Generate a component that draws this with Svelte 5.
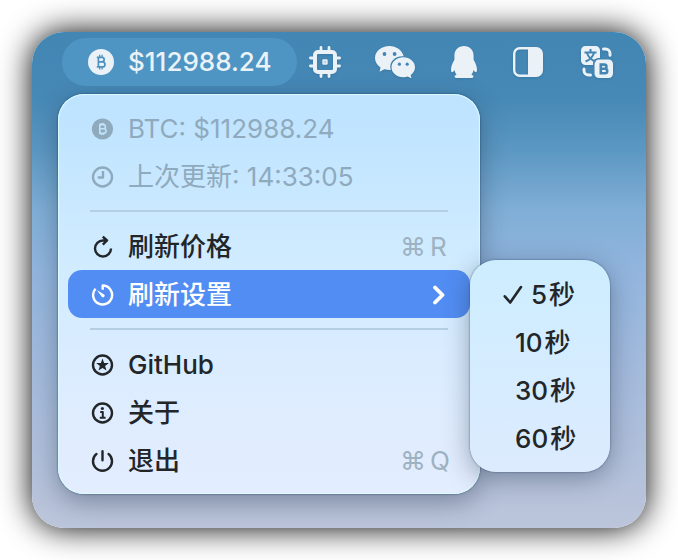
<script>
  const price = '$112988.24';
  const updated = '14:33:05';
  const intervals = [5, 10, 30, 60];
  let selected = $state(5);
</script>

{#snippet bitcoin()}
  <svg class="icon" viewBox="0 0 24 24" aria-hidden="true">
    <circle cx="12.500" cy="12" r="10.6" fill="currentColor" />
    <path class="cut" d="M9.8 7.600h3.500a2.100 2.100 0 0 1 0 4.200H9.800zM9.800 11.800h4a2.250 2.250 0 0 1 0 4.500H9.800zM11.300 6v1.600M13.500 6v1.600M11.300 16.300v1.600M13.500 16.300v1.600" />
  </svg>
{/snippet}

<main class="desktop">
  <header class="menubar">
    <button class="status">
      <svg viewBox="0 0 26 26" width="26" height="26" aria-hidden="true">
        <circle cx="13" cy="13" r="13" fill="#eaf2f7" />
        <g fill="none" stroke="#4d92c0" stroke-width="1.700" stroke-linejoin="round">
          <path d="M10.400 8.300h3.500a2.300 2.300 0 0 1 0 4.600h-3.500zM10.400 12.900h4.100a2.500 2.500 0 0 1 0 5h-4.100M10.400 8.300v9.600M8.800 8.300h1.600M8.800 17.900h1.600" />
          <path stroke-width="1.300" d="M11.700 5.800v2.500M14.100 5.800v2.500M11.700 17.900v2.500M14.100 17.900v2.500" />
        </g>
      </svg>
      <span>{price}</span>
    </button>
    <nav class="tray" aria-label="菜单栏">
      <button aria-label="CPU">
        <svg width="32" height="32" viewBox="0 0 32 32" fill="none" stroke="currentColor">
          <rect x="6" y="6" width="20" height="20" rx="3" stroke-width="4" />
          <path stroke-width="2.800" stroke-linecap="round" d="M12 1.400V5M20 1.400V5M12 27v3.600M20 27v3.600M1.400 12H5M1.400 20H5M27 12h3.600M27 20h3.600" />
          <rect x="14" y="14" width="4" height="4" rx="0.500" fill="#bcd3e2" stroke-width="1.400" />
        </svg>
      </button>
      <button aria-label="微信">
        <svg width="40" height="32" viewBox="0 0 40 32">
          <path fill="currentColor" d="M14.500 0C6.500 0 0 5.200 0 12c0 3.900 2.100 7.200 5.500 9.400L4.600 25.800l4.800-2.600c1.800.5 3.600.8 5.600.8h.8C13.500 16 20 9.800 28.700 10.300 27 4.200 21.300 0 14.500 0z" />
          <path fill="currentColor" d="M28.300 11.200c-6.600 0-11.800 4.500-11.800 10s5.200 10 11.800 10c1.600 0 3.100-.3 4.500-.7l3.700 1.900-.8-3.500c2.700-1.800 4.300-4.600 4.300-7.700 0-5.500-5.100-10-11.700-10z" />
          <g fill="#4385b3">
            <circle cx="9.500" cy="8" r="1.900" /><circle cx="19.600" cy="8" r="1.900" />
            <circle cx="24.400" cy="18.200" r="1.600" /><circle cx="32.200" cy="18.200" r="1.600" />
          </g>
        </svg>
      </button>
      <button aria-label="QQ">
        <svg width="30" height="32" viewBox="0 0 30 32">
          <path fill="currentColor" d="M15 0C9.500 0 5.400 4 5.400 9.500v4.300C3.500 17 2 20.700 2 23.700c0 1.600.4 2.500 1 2.500.7 0 1.600-1 2.400-2.300.5 2 1.100 3.300 2.200 4.800-1.300.4-2 1-2 2 0 .9 1 1.200 3.200 1.200h12.400c2.200 0 3.200-.3 3.200-1.200 0-1-.7-1.600-2-2 1.100-1.500 1.700-2.800 2.200-4.800.8 1.300 1.700 2.300 2.400 2.300.6 0 1-.9 1-2.500 0-3-1.500-6.700-3.400-9.900V9.500C24.600 4 20.500 0 15 0z" />
        </svg>
      </button>
      <button aria-label="分屏">
        <svg width="30" height="30" viewBox="0 0 30 30">
          <rect x="1.200" y="1.200" width="27.600" height="27.600" rx="5.500" fill="none" stroke="currentColor" stroke-width="2.400" />
          <path fill="currentColor" d="M15 1h8a6 6 0 0 1 6 6v16a6 6 0 0 1-6 6h-8z" />
        </svg>
      </button>
      <button aria-label="翻译">
        <svg width="40" height="32" viewBox="0 0 40 32">
          <g transform="translate(4 0)">
            <path fill="currentColor" d="M4.500 0h10A4.500 4.500 0 0 1 19 4.500V12h-1.500a5.500 5.500 0 0 0-5.500 5.500V19H4.500A4.500 4.500 0 0 1 0 14.500v-10A4.500 4.500 0 0 1 4.500 0z" />
            <rect x="13.500" y="13.500" width="18.500" height="18.500" rx="4.500" fill="currentColor" />
            <g fill="none" stroke="#4385b3" stroke-width="2">
              <path d="M9.500 3v3M3.500 6.500h12M6 7c1.300 4 4.300 7 8.500 8.500M13 7c-1.300 4-4.300 7-8.500 8.500" />
              <path stroke-width="2.600" d="M19.800 18.600h3.600a2.050 2.050 0 0 1 0 4.100h-3.600zM19.800 22.700h4.200a2.250 2.250 0 0 1 0 4.500h-4.200z" />
            </g>
            <g fill="none" stroke="currentColor" stroke-width="3" stroke-linecap="round">
              <path d="M22.500 3h2a4.500 4.500 0 0 1 4.500 4.500v1.800M3 23v1.500A4.500 4.500 0 0 0 7.500 29h2" />
            </g>
          </g>
        </svg>
      </button>
    </nav>
  </header>

  <div class="menu panel">
    <button class="row" disabled>
      {@render bitcoin()}
      <span>BTC: {price}</span>
    </button>
    <button class="row" disabled>
      <svg class="icon line" viewBox="0 0 24 24" aria-hidden="true">
        <circle cx="12.500" cy="12" r="9.500" />
        <path d="M13 6v6.500H7.800" />
      </svg>
      <span>上次更新: {updated}</span>
    </button>
    <hr />
    <button class="row">
      <svg class="icon line" viewBox="0 0 24 24" aria-hidden="true">
        <path d="M16.300 5.500H13A8 8 0 1 0 21 13.500M12.800 1.600l4.200 3.900-4.200 4.200" />
      </svg>
      <span>刷新价格</span>
      <kbd><span>⌘</span><span>R</span></kbd>
    </button>
    <div class="parent">
      <button class="row active" aria-haspopup="true" aria-expanded="true">
        <svg class="icon line" viewBox="0 0 24 24" aria-hidden="true">
          <path d="M12.700 6.800V2.500A9.500 9.500 0 1 1 5.500 5.700" />
          <path stroke="none" fill="currentColor" d="M6.800 7 14.100 11.400a1.700 1.700 0 1 1-2.400 2.400z" />
        </svg>
        <span>刷新设置</span>
        <svg class="chevron" width="16" height="20" viewBox="0 0 16 20" aria-hidden="true">
          <path d="M3 2.500l7.500 7.500L3 17.500" />
        </svg>
      </button>
      <div class="submenu panel" role="radiogroup" aria-label="刷新设置">
        {#each intervals as seconds}
          <label class="option" class:checked={selected === seconds}>
            <input type="radio" name="interval" value={seconds} bind:group={selected} />
            {#if selected === seconds}
              <svg width="20" height="20" viewBox="0 0 20 20" aria-hidden="true">
                <path d="M1.800 11.300l5.400 6.200L18 2" />
              </svg>
            {/if}
            <span>{seconds}</span><span class="unit">秒</span>
          </label>
        {/each}
      </div>
    </div>
    <hr />
    <button class="row">
      <svg class="icon line" viewBox="0 0 24 24" aria-hidden="true">
        <circle cx="12.500" cy="12" r="9.500" />
        <path stroke="none" fill="currentColor" d="M12.500 5.500l1.600 4.500 4.800.1-3.800 2.900 1.400 4.600-4-2.700-4 2.700 1.400-4.600-3.800-2.900 4.800-.1z" />
      </svg>
      <span>GitHub</span>
    </button>
    <button class="row">
      <svg class="icon line" viewBox="0 0 24 24" aria-hidden="true">
        <circle cx="12.500" cy="12" r="9.500" />
        <circle cx="12.400" cy="7.500" r="1.600" stroke="none" fill="currentColor" />
        <path stroke-width="2" d="M10.200 11h2.600v5.600M9.800 16.700h5.800" />
      </svg>
      <span>关于</span>
    </button>
    <button class="row">
      <svg class="icon line" viewBox="0 0 24 24" aria-hidden="true">
        <path stroke-linecap="round" d="M12.500 2.200v9M6.500 4.900a9.500 9.500 0 1 0 12 0" />
      </svg>
      <span>退出</span>
      <kbd><span>⌘</span><span>Q</span></kbd>
    </button>
  </div>
</main>

<style>
  :global(body) {
    margin: 0;
    background: #fff;
  }

  .desktop {
    margin: 32px;
    padding: 6px 30px 34px;
    border-radius: 32px;
    background: linear-gradient(#4286b4 0, #4688b6 13%, #5c98c3 24%, #80aed6 36%, #92b5de 48%, #a8bcdc 74%, #bcc5da 100%);
    box-shadow: 0 0 32px #000;
    font-family: Inter, "Noto Sans CJK SC", sans-serif;
    font-size: 26px;
    font-weight: 500;
    line-height: 32px;
    color: #222629;
  }

  button {
    border: 0;
    padding: 0;
    background: none;
    font: inherit;
    color: inherit;
  }

  .menubar,
  .status,
  .tray,
  .tray button {
    display: flex;
    align-items: center;
  }

  .menubar {
    gap: 12px;
    color: #eaf2f7;
  }

  .status {
    height: 48px;
    padding: 0 25px 0 26px;
    gap: 14px;
    border-radius: 24px;
    background: #4f95c4;
  }

  .tray {
    gap: 34px;
  }

  .tray svg {
    filter: drop-shadow(0 1px 1px rgba(20, 60, 90, 0.2));
  }

  .panel {
    box-sizing: border-box;
    padding: 10px;
    border-radius: 26px;
  }

  .menu {
    margin: 8px 136px 0 -4px;
    background: linear-gradient(#bde3ff, #c8e8ff 25%, #d2ecff 45%, #dcecff 70%, #e3edfe);
    box-shadow:
      inset 0 0 1px 1px #dcfbff,
      0 0 2px rgba(20, 50, 80, 0.8),
      0 8px 26px rgba(30, 45, 65, 0.4);
  }

  .row {
    display: flex;
    align-items: center;
    gap: 14px;
    width: 100%;
    height: 48px;
    padding: 1px 22px 0;
    border-radius: 14px;
    text-align: left;
    white-space: nowrap;
  }

  .row:disabled {
    color: #8faabd;
    font-weight: 400;
  }

  .row.active {
    background: #528df3;
    color: #fff;
  }

  .icon {
    flex: none;
    width: 24px;
    height: 24px;
  }

  .line {
    fill: none;
    stroke: currentColor;
    stroke-width: 2.400;
    stroke-linejoin: round;
  }

  .cut {
    fill: none;
    stroke: #bfe3fd;
    stroke-width: 1.600;
  }

  .chevron {
    margin-left: auto;
    fill: none;
    stroke: #fff;
    stroke-width: 3.800;
    stroke-linecap: round;
    stroke-linejoin: round;
  }

  kbd {
    display: flex;
    gap: 4px;
    margin-left: auto;
    font: inherit;
    font-weight: 400;
    color: #9eb2c2;
  }

  kbd span:last-child {
    width: 18px;
  }

  hr {
    height: 2px;
    margin: 10px 22px;
    border: 0;
    background: #b5cfe2;
  }

  .parent {
    position: relative;
  }

  .submenu {
    position: absolute;
    top: -10px;
    left: 100%;
    width: 140px;
    background: linear-gradient(#cdedff, #d5ecff 50%, #ddebfe);
    box-shadow:
      0 0 2px rgba(40, 65, 95, 0.8),
      0 6px 26px rgba(30, 45, 65, 0.4);
  }

  .option {
    box-sizing: border-box;
    display: flex;
    align-items: center;
    height: 48px;
    padding: 1px 0 0 35px;
  }

  .option.checked {
    padding-left: 23px;
  }

  .option input {
    position: absolute;
    opacity: 0;
    pointer-events: none;
  }

  .option svg {
    margin-right: 8px;
    fill: none;
    stroke: currentColor;
    stroke-width: 2.600;
    stroke-linecap: round;
    stroke-linejoin: round;
  }

  .unit {
    margin-left: 2px;
  }
</style>
